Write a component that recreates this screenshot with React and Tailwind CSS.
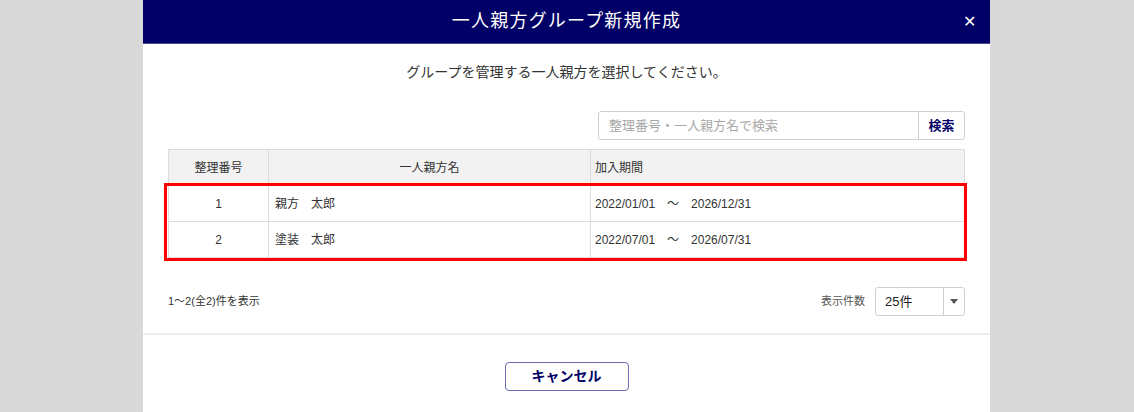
export default function App() {
  const rows = [
    { no: "1", name: "親方　太郎", period: "2022/01/01　～　2026/12/31" },
    { no: "2", name: "塗装　太郎", period: "2022/07/01　～　2026/07/31" },
  ];
  return (
    <div
      className="w-[1134px] h-[412px] bg-[#d9d9d9] flex justify-center overflow-hidden"
      style={{ fontFamily: '"Liberation Sans", "Noto Sans CJK JP", sans-serif' }}
    >
      <div className="w-[847px] ml-[-1px] bg-white flex flex-col">
        <div className="h-[44px] bg-[#000066] border-b border-[#4a4a8a] flex items-center justify-center relative">
          <span className="text-white text-[18px] tracking-[1.2px]">一人親方グループ新規作成</span>
          <span className="absolute right-[14px] top-[10px] text-white text-[16px]">✕</span>
        </div>
        <div className="text-center text-[14px] text-[#333] mt-[18px]">
          グループを管理する一人親方を選択してください。
        </div>
        <div className="px-[25px]">
          <div className="flex justify-end mt-[28px]">
            <div className="w-[367px] h-[29px] border border-[#cfcfcf] rounded-[3px] flex">
              <div className="flex-1 flex items-center pl-[10px] text-[13px] text-[#a8a8a8]">整理番号・一人親方名で検索</div>
              <div className="w-[46px] border-l border-[#cfcfcf] flex items-center justify-center text-[13px] font-bold text-[#000066]">検索</div>
            </div>
          </div>
          <div className="relative mt-[9px] text-[12px] text-[#333]">
            <div className="border border-[#dcdcdc]">
              <div className="grid grid-cols-[100px_322px_1fr] h-[35px] bg-[#f2f2f2]">
                <div className="flex items-center justify-center border-r border-[#dcdcdc]">整理番号</div>
                <div className="flex items-center justify-center border-r border-[#dcdcdc]">一人親方名</div>
                <div className="flex items-center pl-[4px]">加入期間</div>
              </div>
              {rows.map((r) => (
                <div key={r.no} className="grid grid-cols-[100px_322px_1fr] h-[36px] border-t border-[#dcdcdc]">
                  <div className="flex items-center justify-center border-r border-[#dcdcdc]">{r.no}</div>
                  <div className="flex items-center pl-[6px] border-r border-[#dcdcdc]">{r.name}</div>
                  <div className="flex items-center pl-[4px]">{r.period}</div>
                </div>
              ))}
            </div>
            <div className="absolute left-[-4px] right-[-2px] top-[34px] h-[78px] border-[3px] border-[#ff0000]"></div>
          </div>
          <div className="flex items-center justify-between mt-[29px]">
            <span className="text-[11px] text-[#333]">1～2(全2)件を表示</span>
            <div className="flex items-center gap-[10px]">
              <span className="text-[11px] text-[#555]">表示件数</span>
              <div className="w-[90px] h-[29px] border border-[#cfcfcf] rounded-[3px] flex">
                <div className="flex-1 flex items-center pl-[9px] text-[13px] text-[#222]">25件</div>
                <div className="w-[21px] border-l border-[#cfcfcf] flex items-center justify-center">
                  <svg width="8" height="5" viewBox="0 0 8 5"><path d="M0 0h8L4 5z" fill="#555" /></svg>
                </div>
              </div>
            </div>
          </div>
        </div>
        <div className="border-t-2 border-[#eeeeee] mt-[17px] flex justify-center">
          <div className="mt-[27px] w-[124px] h-[29px] border border-[#6b6bb0] rounded-[4px] flex items-center justify-center text-[14px] font-bold text-[#000066]">
            キャンセル
          </div>
        </div>
      </div>
    </div>
  );
}
